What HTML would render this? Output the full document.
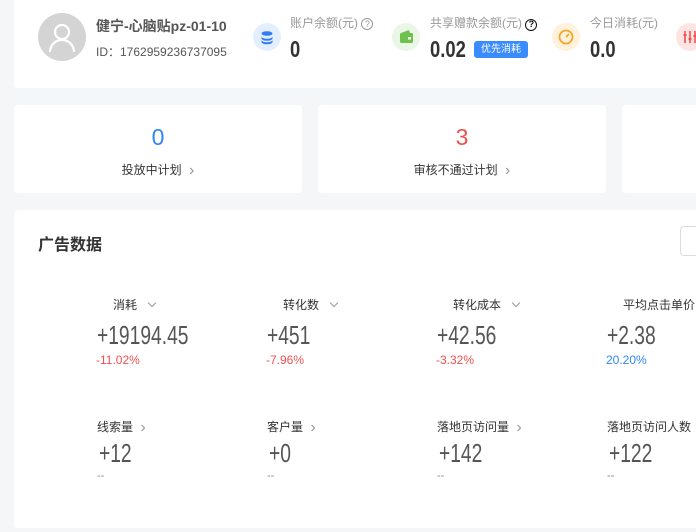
<!DOCTYPE html>
<html><head><meta charset="utf-8"><style>
*{margin:0;padding:0;box-sizing:border-box}
body{width:696px;height:532px;background:#f5f6f8;position:relative;overflow:hidden;font-family:"Liberation Sans","Noto Sans CJK SC",sans-serif;color:#333}
.a{position:absolute;white-space:nowrap}
.card{position:absolute;background:#fff;border-radius:4px}
.num{font-family:"Liberation Sans Narrow","Liberation Sans",sans-serif;}
.big{font-size:26px;color:#555;transform:scaleX(.74);transform-origin:left}
.tn{font-size:23px;font-weight:bold;color:#333;transform:scaleX(.8);transform-origin:left}
.lbl{font-size:12px;color:#333}
.chev{color:#999;font-size:16px;line-height:12px;vertical-align:-1px;margin-left:4px}
.dn{display:inline-block;width:6px;height:6px;border-right:1px solid #999;border-bottom:1px solid #999;transform:rotate(45deg);margin-left:12px;vertical-align:3px}
.ic{position:absolute;width:28px;height:28px;border-radius:50%}
</style></head><body>
<div class="card" style="left:14px;top:-4px;width:700px;height:92px"></div>
<div class="a" style="left:38px;top:13px;width:48px;height:48px;border-radius:50%;background:#d4d4d4">
<svg width="48" height="48" viewBox="0 0 48 48"><circle cx="24" cy="19" r="7" fill="none" stroke="#fff" stroke-width="2.2"/><path d="M12 38c1-7 6-11 12-11s11 4 12 11" fill="none" stroke="#fff" stroke-width="2.2" stroke-linecap="round"/></svg></div>
<div class="a" style="left:96px;top:16px;font-size:14px;font-weight:bold;color:#555">健宁-心脑贴pz-01-10</div>
<div class="a" style="left:96px;top:43px;font-size:12px;color:#555">ID：1762959236737095</div>

<div class="ic" style="left:253px;top:23px;background:#e3efff"><svg width="28" height="28"><ellipse cx="14" cy="10.5" rx="5.5" ry="2.3" fill="#2f7cf6"/><path d="M8.5 13.5a5.5 2.3 0 0 0 11 0v2a5.5 2.3 0 0 1-11 0z" fill="#2f7cf6"/><path d="M8.5 17a5.5 2.3 0 0 0 11 0v2a5.5 2.3 0 0 1-11 0z" fill="#2f7cf6"/></svg></div>
<div class="a" style="left:290px;top:14px;font-size:12px;color:#999">账户余额(元) <span style="display:inline-block;width:12px;height:12px;border:1px solid #999;border-radius:50%;font-size:9px;text-align:center;line-height:10px">?</span></div>
<div class="a num tn" style="left:290px;top:36px">0</div>

<div class="ic" style="left:392px;top:23px;background:#eaf6e6"><svg width="28" height="28"><rect x="8" y="10" width="13" height="10" rx="1.5" fill="#6cc24a"/><path d="M9 10l8-3 1 3z" fill="#6cc24a"/><rect x="16" y="14" width="3" height="2.5" fill="#fff"/></svg></div>
<div class="a" style="left:430px;top:14px;font-size:12px;color:#999">共享赠款余额(元) <span style="display:inline-block;width:12px;height:12px;border:1.5px solid #111;border-radius:50%;font-size:9px;color:#111;text-align:center;line-height:9px;font-weight:bold">?</span></div>
<div class="a num tn" style="left:430px;top:36px">0.02</div>
<div class="a" style="left:474px;top:41px;width:54px;height:17px;background:#3a8bff;border-radius:3px;color:#fff;font-size:10px;text-align:center;line-height:17px">优先消耗</div>

<div class="ic" style="left:552px;top:23px;background:#fff1dc"><svg width="28" height="28"><circle cx="14" cy="14" r="6.5" fill="none" stroke="#f5a623" stroke-width="1.8"/><path d="M14 14l3-3" stroke="#f5a623" stroke-width="1.8"/></svg></div>
<div class="a" style="left:590px;top:14px;font-size:12px;color:#999">今日消耗(元)</div>
<div class="a num tn" style="left:590px;top:36px">0.0</div>
<div class="ic" style="left:676px;top:23px;background:#ffe4e4"><svg width="28" height="28"><path d="M9 8v12M14 8v12M19 8v12" stroke="#f05050" stroke-width="1.6"/><rect x="7.5" y="11" width="3" height="2" fill="#f05050"/><rect x="12.5" y="15" width="3" height="2" fill="#f05050"/><rect x="17.5" y="12" width="3" height="2" fill="#f05050"/></svg></div>

<div class="card" style="left:14px;top:105px;width:288px;height:88px"></div>
<div class="a" style="left:14px;top:124px;width:288px;text-align:center;font-size:23px;color:#2f86f6">0</div>
<div class="a lbl" style="left:14px;top:161px;width:288px;text-align:center">投放中计划 <span class="chev">›</span></div>
<div class="card" style="left:318px;top:105px;width:288px;height:88px"></div>
<div class="a" style="left:318px;top:124px;width:288px;text-align:center;font-size:23px;color:#f05050">3</div>
<div class="a lbl" style="left:318px;top:161px;width:288px;text-align:center">审核不通过计划 <span class="chev">›</span></div>
<div class="card" style="left:622px;top:105px;width:100px;height:88px"></div>

<div class="card" style="left:14px;top:210px;width:700px;height:318px"></div>
<div class="a" style="left:38px;top:231px;font-size:16px;font-weight:bold;color:#333">广告数据</div>
<div class="a" style="left:680px;top:226px;width:30px;height:30px;border:1px solid #ddd;border-radius:4px"></div>

<div class="a lbl" style="left:113px;top:296px">消耗<span class="dn"></span></div>
<div class="a num big" style="left:97px;top:320px">+19194.45</div>
<div class="a" style="left:96px;top:353px;font-size:12px;color:#f05050">-11.02%</div>
<div class="a lbl" style="left:283px;top:296px">转化数<span class="dn"></span></div>
<div class="a num big" style="left:267px;top:320px">+451</div>
<div class="a" style="left:266px;top:353px;font-size:12px;color:#f05050">-7.96%</div>
<div class="a lbl" style="left:453px;top:296px">转化成本<span class="dn"></span></div>
<div class="a num big" style="left:437px;top:320px">+42.56</div>
<div class="a" style="left:436px;top:353px;font-size:12px;color:#f05050">-3.32%</div>
<div class="a lbl" style="left:623px;top:296px">平均点击单价</div>
<div class="a num big" style="left:607px;top:320px">+2.38</div>
<div class="a" style="left:606px;top:353px;font-size:12px;color:#2f86f6">20.20%</div>

<div class="a lbl" style="left:97px;top:418px">线索量 <span class="chev">›</span></div>
<div class="a num big" style="left:99px;top:438px">+12</div>
<div class="a" style="left:97px;top:470px;font-size:11px;color:#888">--</div>
<div class="a lbl" style="left:267px;top:418px">客户量 <span class="chev">›</span></div>
<div class="a num big" style="left:269px;top:438px">+0</div>
<div class="a" style="left:267px;top:470px;font-size:11px;color:#888">--</div>
<div class="a lbl" style="left:437px;top:418px">落地页访问量 <span class="chev">›</span></div>
<div class="a num big" style="left:439px;top:438px">+142</div>
<div class="a" style="left:437px;top:470px;font-size:11px;color:#888">--</div>
<div class="a lbl" style="left:607px;top:418px">落地页访问人数</div>
<div class="a num big" style="left:609px;top:438px">+122</div>
<div class="a" style="left:607px;top:470px;font-size:11px;color:#888">--</div>
</body></html>
